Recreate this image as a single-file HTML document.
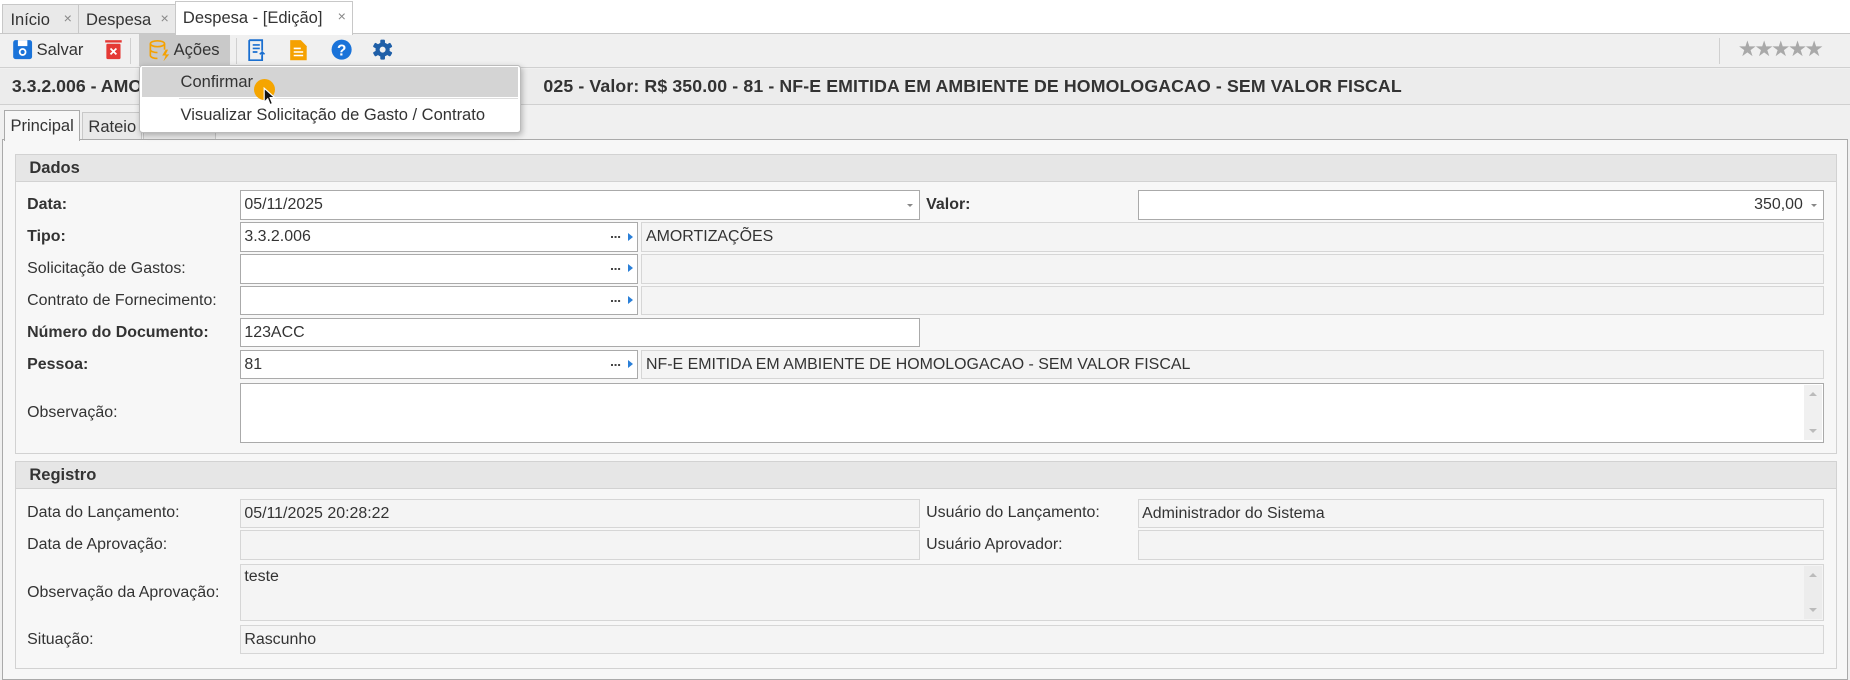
<!DOCTYPE html>
<html><head><meta charset="utf-8">
<style>
html{zoom:1.18135}
body{margin:0;width:1566px;height:576px;overflow:hidden;background:#fff;font-family:"Liberation Sans",sans-serif;font-size:13.5px;color:#333;position:relative}
.a{position:absolute}
.tab{position:absolute;top:3px;height:25px;line-height:25px;background:#e9e9e9;border:1px solid #c8c8c8;border-bottom:none;padding-left:6px;font-size:14px}
.tab i{position:absolute;right:5px;top:0;font-style:normal;color:#888;font-size:12px}
.lbl{position:absolute;left:23px;font-size:13.5px;color:#333}
.b{font-weight:bold}
.in{position:absolute;line-height:23px;background:#fff;border:1px solid #aaa;padding-left:3px;box-sizing:border-box;height:25px}
.ro{position:absolute;height:25px;line-height:23px;background:#f4f4f4;border:1px solid #d6d6d6;padding-left:3px;box-sizing:border-box}
.dots{position:absolute;right:20px;top:11px;width:2px;height:2px;background:#444;box-shadow:3px 0 #444,6px 0 #444}
.tri{position:absolute;right:3px;top:8px;width:0;height:0;border-left:5px solid #2a7fd8;border-top:4px solid transparent;border-bottom:4px solid transparent}
.dd{position:absolute;right:5px;top:11px;width:0;height:0;border-top:3px solid #888;border-left:3px solid transparent;border-right:3px solid transparent}
.grp{position:absolute;left:13px;width:1540px;border:1px solid #d2d2d2;background:#f7f7f7}
.gh{height:22px;line-height:22px;background:#e6e6e6;border-bottom:1px solid #d2d2d2;padding-left:11px;font-weight:bold;font-size:14px}
.sb{position:absolute;right:1px;top:1px;width:15px;background:#f0f0f0}
.sb:before{content:"";position:absolute;left:4px;top:6px;border-bottom:4px solid #bbb;border-left:3.5px solid transparent;border-right:3.5px solid transparent}
.sb:after{content:"";position:absolute;left:4px;bottom:6px;border-top:4px solid #bbb;border-left:3.5px solid transparent;border-right:3.5px solid transparent}
</style></head><body>
<div class="a" style="left:0;top:28px;width:1566px;height:548px;background:#f0f0f0"></div>
<div class="tab" style="left:2px;width:57px">Início<i>×</i></div>
<div class="tab" style="left:66px;width:75px">Despesa<i>×</i></div>
<div class="tab" style="left:148px;width:143px;background:#fff;top:1px;height:28px;line-height:27px;z-index:2">Despesa - [Edição]<i style="line-height:27px">×</i></div>
<div class="a" style="left:0;top:28px;width:1566px;height:1px;background:#c8c8c8"></div>
<!-- toolbar -->
<div class="a" style="left:0;top:29px;width:1566px;height:28px;background:#f0f0f0;border-bottom:1px solid #d0d0d0"></div>
<svg class="a" style="left:10px;top:33px" width="18" height="18" viewBox="0 0 18 18"><rect x="1" y="1" width="16" height="16" rx="2" fill="#1a73d9"/><rect x="5" y="1" width="8" height="5" fill="#fff"/><circle cx="9" cy="11" r="2.5" fill="none" stroke="#fff" stroke-width="1.5"/></svg>
<div class="a" style="left:31px;top:34px;font-size:14px">Salvar</div>
<svg class="a" style="left:88px;top:33px" width="16" height="18" viewBox="0 0 16 18"><rect x="1" y="1" width="14" height="2" fill="#e53935"/><rect x="2" y="4" width="12" height="13" rx="1" fill="#e53935"/><path d="M5.5 8l5 5M10.5 8l-5 5" stroke="#fff" stroke-width="1.5"/></svg>
<div class="a" style="left:110px;top:32px;width:1px;height:22px;background:#d0d0d0"></div>
<div class="a" style="left:118px;top:29px;width:77px;height:27px;background:#c9c9c9"></div>
<svg class="a" style="left:125px;top:33px" width="20" height="19" viewBox="0 0 20 19"><ellipse cx="8" cy="4" rx="6" ry="2.5" fill="none" stroke="#f5a100" stroke-width="1.4"/><path d="M2 4v10c0 1.5 3 2.5 6 2.5M14 4v5M2 9c0 1.5 3 2.5 6 2.5" fill="none" stroke="#f5a100" stroke-width="1.4"/><path d="M15 9l-3 5h3l-2 5 5-6h-3l2-4z" fill="#f5a100"/></svg>
<div class="a" style="left:147px;top:34px;font-size:14px">Ações</div>
<div class="a" style="left:200px;top:32px;width:1px;height:22px;background:#d0d0d0"></div>
<svg class="a" style="left:210px;top:33px" width="16" height="19" viewBox="0 0 16 19"><path d="M1 1h11v9M12 14v4H1V1" fill="none" stroke="#1a6fd0" stroke-width="1.5"/><path d="M4 5h6M4 8h6M4 11h4M12 17v-6M10 13l2-2 2 2" fill="none" stroke="#1a6fd0" stroke-width="1.4"/></svg>
<svg class="a" style="left:245px;top:33px" width="16" height="19" viewBox="0 0 16 19"><path d="M1 1h9l5 5v12H1z" fill="#f5a100"/><path d="M4 8h6M4 11h8M4 14h8" stroke="#fff" stroke-width="1.3"/></svg>
<svg class="a" style="left:280px;top:33px" width="18" height="18" viewBox="0 0 18 18"><circle cx="9" cy="9" r="8.5" fill="#1a73d9"/><text x="9" y="14" text-anchor="middle" font-family="Liberation Sans" font-weight="bold" font-size="13" fill="#fff">?</text></svg>
<svg class="a" style="left:315px;top:33px" width="18" height="18" viewBox="0 0 18 18"><g fill="#1f5fa8"><circle cx="9" cy="9" r="6"/><rect x="7" y="0.5" width="4" height="17" rx="1"/><rect x="7" y="0.5" width="4" height="17" rx="1" transform="rotate(60 9 9)"/><rect x="7" y="0.5" width="4" height="17" rx="1" transform="rotate(120 9 9)"/></g><circle cx="9" cy="9" r="2.5" fill="#f0f0f0"/></svg>
<div class="a" style="left:1455px;top:32px;width:1px;height:22px;background:#d0d0d0"></div>
<div class="a" style="left:1471px;top:31px;font-size:18px;color:#a9a9a9;letter-spacing:-2px">★★★★★</div>
<!-- title bar -->
<div class="a" style="left:0;top:58px;width:1566px;height:30px;background:#ececec;border-bottom:1px solid #d0d0d0"></div>
<div class="a b" style="left:10px;top:64px;font-size:15px;white-space:nowrap">3.3.2.006 - AMORTIZAÇÕES</div>
<div class="a b" style="left:460px;top:64px;font-size:15px;white-space:nowrap;letter-spacing:0.1px">025 - Valor: R$ 350.00 - 81 - NF-E EMITIDA EM AMBIENTE DE HOMOLOGACAO - SEM VALOR FISCAL</div>
<!-- tabs -->
<div class="a" style="left:2px;top:118px;width:1561px;height:456px;background:#f7f7f7;border:1px solid #aaa"></div>
<div class="a" style="left:3px;top:93px;width:65px;height:26px;background:#f7f7f7;border:1px solid #aaa;border-bottom:none;line-height:25px;padding-left:5px;box-sizing:border-box;font-size:14px">Principal</div>
<div class="a" style="left:69px;top:95px;width:51px;height:23px;background:#e9e9e9;border:1px solid #c8c8c8;border-bottom:none;line-height:23px;padding-left:5px;box-sizing:border-box;font-size:14px">Rateio</div>
<div class="a" style="left:121px;top:95px;width:62px;height:23px;background:#e9e9e9;border:1px solid #c8c8c8;border-bottom:none;line-height:23px;padding-left:5px;box-sizing:border-box;font-size:14px">Parcelas</div>
<!-- Dados -->
<div class="grp" style="top:130px;height:253px"><div class="gh">Dados</div></div>
<div class="lbl b" style="top:166px">Data:</div>
<div class="in" style="left:203px;top:161px;width:576px">05/11/2025<span class="dd"></span></div>
<div class="lbl b" style="left:784px;top:166px">Valor:</div>
<div class="in" style="left:963px;top:161px;width:581px;text-align:right;padding-right:17px">350,00<span class="dd"></span></div>
<div class="lbl b" style="top:193px">Tipo:</div>
<div class="in" style="left:203px;top:188px;width:337px">3.3.2.006<span class="dots"></span><span class="tri"></span></div>
<div class="ro" style="left:543px;top:188px;width:1001px">AMORTIZAÇÕES</div>
<div class="lbl" style="top:220px">Solicitação de Gastos:</div>
<div class="in" style="left:203px;top:215px;width:337px"><span class="dots"></span><span class="tri"></span></div>
<div class="ro" style="left:543px;top:215px;width:1001px"></div>
<div class="lbl" style="top:247px">Contrato de Fornecimento:</div>
<div class="in" style="left:203px;top:242px;width:337px"><span class="dots"></span><span class="tri"></span></div>
<div class="ro" style="left:543px;top:242px;width:1001px"></div>
<div class="lbl b" style="top:274px">Número do Documento:</div>
<div class="in" style="left:203px;top:269px;width:576px">123ACC</div>
<div class="lbl b" style="top:301px">Pessoa:</div>
<div class="in" style="left:203px;top:296px;width:337px">81<span class="dots"></span><span class="tri"></span></div>
<div class="ro" style="left:543px;top:296px;width:1001px">NF-E EMITIDA EM AMBIENTE DE HOMOLOGACAO - SEM VALOR FISCAL</div>
<div class="lbl" style="top:342px">Observação:</div>
<div class="in" style="left:203px;top:324px;width:1341px;height:51px"><div class="sb" style="height:47px"></div></div>
<!-- Registro -->
<div class="grp" style="top:390px;height:175px"><div class="gh">Registro</div></div>
<div class="lbl" style="top:427px">Data do Lançamento:</div>
<div class="ro" style="left:203px;top:422px;width:576px">05/11/2025 20:28:22</div>
<div class="lbl" style="left:784px;top:427px">Usuário do Lançamento:</div>
<div class="ro" style="left:963px;top:422px;width:581px">Administrador do Sistema</div>
<div class="lbl" style="top:454px">Data de Aprovação:</div>
<div class="ro" style="left:203px;top:449px;width:576px"></div>
<div class="lbl" style="left:784px;top:454px">Usuário Aprovador:</div>
<div class="ro" style="left:963px;top:449px;width:581px"></div>
<div class="lbl" style="top:494px">Observação da Aprovação:</div>
<div class="ro" style="left:203px;top:477px;width:1341px;height:49px;line-height:20px">teste<div class="sb" style="height:45px;background:#ececec"></div></div>
<div class="lbl" style="top:534px">Situação:</div>
<div class="ro" style="left:203px;top:529px;width:1341px">Rascunho</div>
<!-- dropdown -->
<div class="a" style="left:118px;top:55px;width:321px;height:56px;background:#fff;border:1px solid #bbb;border-radius:3px;box-shadow:1px 2px 5px rgba(0,0,0,.25);z-index:5">
<div class="a" style="left:1px;top:1px;width:319px;height:25px;background:#d4d4d4"></div>
<div class="a" style="left:33px;top:27px;width:287px;height:1px;background:#ddd"></div>
<div class="a" style="left:34px;top:5px;font-size:14px">Confirmar</div>
<div class="a" style="left:34px;top:33px;font-size:14px;white-space:nowrap">Visualizar Solicitação de Gasto / Contrato</div>
<div class="a" style="left:96px;top:11px;width:18px;height:18px;border-radius:50%;background:#f5a500"></div>
<svg class="a" style="left:104px;top:18px" width="12" height="16" viewBox="0 0 12 16"><path d="M1 1v12l3-3 2 5 2-1-2-5h4z" fill="#111" stroke="#fff" stroke-width="1"/></svg>
</div>
</body></html>
